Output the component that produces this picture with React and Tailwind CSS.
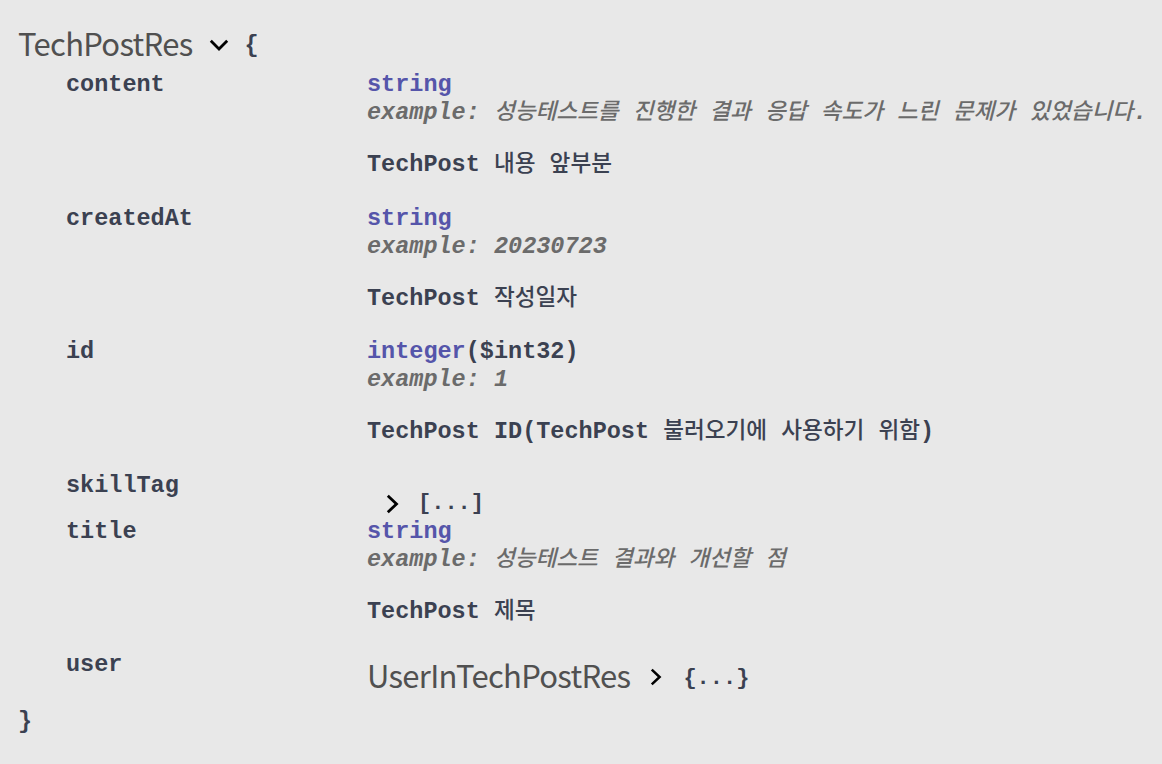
import React from "react";

function Txt({ text, kClass = "" }) {
  const parts = text.split(/([\uAC00-\uD7A3]+)/);
  return (
    <>
      {parts.map((p, i) =>
        /[\uAC00-\uD7A3]/.test(p) ? (
          <span
            key={i}
            className={"font-['Noto_Sans_CJK_KR',sans-serif] text-[22.6px] leading-[0px] " + kClass}
          >
            {p}
          </span>
        ) : (
          <span key={i}>{p}</span>
        )
      )}
    </>
  );
}

function ChevronDown() {
  return (
    <svg width="20" height="12" viewBox="0 0 20 12" className="shrink-0">
      <polyline points="1.8,1.8 10,10 18.2,1.8" fill="none" stroke="#000" strokeWidth="2.8" />
    </svg>
  );
}

function ChevronRight({ w = 13, h = 20 }) {
  return (
    <svg width={w} height={h} viewBox="0 0 13 20" className="shrink-0">
      <polyline points="1.8,1.8 10.5,10 1.8,18.2" fill="none" stroke="#000" strokeWidth="2.8" />
    </svg>
  );
}

function PrimRow({ name, type, fmt, example, desc }) {
  return (
    <div className="flex mb-[25.5px]">
      <div className="w-[301px] shrink-0 font-bold h-[28px]">{name}</div>
      <div className="flex flex-col">
        <div className="font-bold whitespace-nowrap h-[28px]">
          <span className="text-[#55a]">{type}</span>
          {fmt && <span className="text-[#3b4151]">{fmt}</span>}
        </div>
        <div className="font-bold italic text-[#6b6b6b] whitespace-nowrap h-[28px]">
          <Txt text={"example: " + example} kClass="font-medium" />
        </div>
        <div className="mt-6 font-bold whitespace-nowrap h-[28px]">
          <Txt text={desc} kClass="font-medium" />
        </div>
      </div>
    </div>
  );
}

export default function App() {
  return (
    <div className="min-h-screen w-full bg-[#e8e8e8] text-[#3b4151] font-['Liberation_Mono',monospace] text-[23.5px] leading-[28px] overflow-hidden">
      <div className="pl-[18px] pt-[23px]">
        <div className="flex items-center h-[40px]">
          <span className="font-['Noto_Sans_CJK_KR',sans-serif] text-[31px] tracking-[-0.7px] leading-[40px] text-[#505050]">
            TechPostRes
          </span>
          <span className="ml-[16px] mt-[4px] flex">
            <ChevronDown />
          </span>
          <span className="ml-[16px] mt-[6px] font-bold">{"{"}</span>
        </div>
        <div className="pl-[48px] pt-[8px]">
          <PrimRow
            name="content"
            type="string"
            example="성능테스트를 진행한 결과 응답 속도가 느린 문제가 있었습니다."
            desc="TechPost 내용 앞부분"
          />
          <PrimRow
            name="createdAt"
            type="string"
            example="20230723"
            desc="TechPost 작성일자"
          />
          <PrimRow
            name="id"
            type="integer"
            fmt="($int32)"
            example="1"
            desc="TechPost ID(TechPost 불러오기에 사용하기 위함)"
          />
          <div className="flex">
            <div className="w-[301px] shrink-0 font-bold h-[28px]">skillTag</div>
            <div className="pt-[18px] flex items-center h-[46px]">
              <span className="ml-[19px] flex">
                <ChevronRight />
              </span>
              <span className="ml-[19px] font-bold text-[22px]">[...]</span>
            </div>
          </div>
          <PrimRow
            name="title"
            type="string"
            example="성능테스트 결과와 개선할 점"
            desc="TechPost 제목"
          />
          <div className="flex">
            <div className="w-[301px] shrink-0 font-bold h-[28px]">user</div>
            <div className="mt-[4px] flex items-center h-[40px]">
              <span className="font-['Noto_Sans_CJK_KR',sans-serif] text-[31px] tracking-[-0.7px] leading-[40px] text-[#505050]">
                UserInTechPostRes
              </span>
              <span className="ml-[20px] mt-[4px] flex">
                <ChevronRight w={12} h={18} />
              </span>
              <span className="ml-[21px] mt-[8px] font-bold text-[22px]">{"{...}"}</span>
            </div>
          </div>
        </div>
        <div className="mt-[13px] font-bold">{"}"}</div>
      </div>
    </div>
  );
}
